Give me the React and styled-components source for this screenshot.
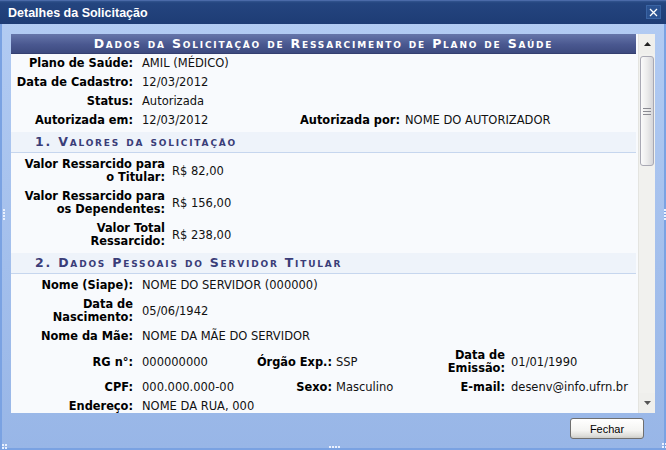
import React from "react";
import styled, { createGlobalStyle } from "styled-components";

const Global = createGlobalStyle`
  html, body { margin: 0; padding: 0; }
  body { width: 666px; height: 450px; overflow: hidden; background: #fff; }
  * { box-sizing: border-box; }
`;

const Window = styled.div`
  position: relative;
  width: 666px;
  height: 450px;
  display: flex;
  flex-direction: column;
  background: linear-gradient(#b3ccf3, #98b6e7);
  border: 2px solid #7aa2e2;
  border-top: none;
  font-family: "DejaVu Sans", Verdana, sans-serif;
`;

const TitleBar = styled.div`
  height: 24px;
  margin: 0 -2px;
  flex: none;
  display: flex;
  align-items: center;
  justify-content: space-between;
  padding: 0 5px 0 8px;
  background: linear-gradient(#33558f 0px, #24457f 2px, #1e3c75 100%);
  border-top: 1px solid #4a6aa8;
`;

const Title = styled.span`
  font-family: "Liberation Sans", Arial, sans-serif;
  font-weight: bold;
  font-size: 12.5px;
  color: #fff;
`;

const CloseBox = styled.div`
  width: 15px;
  height: 14px;
  display: flex;
  align-items: center;
  justify-content: center;
  background: #2b5291;
  border: 1px solid #3a64a4;
  margin-top: -1px;
`;

const Body = styled.div`
  flex: 1;
  display: flex;
  flex-direction: column;
  padding: 10px 9px 0 9px;
`;

const Frame = styled.div`
  height: 379px;
  flex: none;
  display: flex;
  background: #f8fafd;
`;

const Scroller = styled.div`
  flex: 1;
  overflow: hidden;
  padding-right: 2px;
`;

const Caption = styled.div`
  height: 20px;
  line-height: 20px;
  text-align: center;
  color: #fff;
  font-weight: bold;
  font-size: 12.5px;
  font-variant: small-caps;
  letter-spacing: 1.8px;
  white-space: nowrap;
  background: linear-gradient(#6676aa, #4a5890 55%, #3d4a7f);
  border-bottom: 1px solid #343f70;
`;

const Section = styled.div`
  margin-top: 2px;
  height: 21px;
  line-height: 20px;
  padding-left: 24px;
  color: #3a3d78;
  font-weight: bold;
  font-size: 12.5px;
  font-variant: small-caps;
  letter-spacing: 1.8px;
  white-space: nowrap;
  background: #eef3fa;
  border-bottom: 1px solid #c6d6ee;
`;

const Grid = styled.div`
  display: grid;
  grid-template-columns: ${(p) => p.$cols};
  margin-top: ${(p) => p.$top || 0}px;
  align-items: center;
`;

const Label = styled.div`
  text-align: right;
  font-weight: bold;
  font-size: 11.4px;
  line-height: 13px;
  padding: 3px 0;
  color: #000;
  white-space: nowrap;
`;

const Value = styled.div`
  grid-column: span ${(p) => p.$span || 1};
  font-size: 11.5px;
  line-height: 13px;
  padding: 3px 0 3px ${(p) => p.$pad || 0}px;
  color: #111;
  white-space: nowrap;
`;

const ScrollBar = styled.div`
  width: 17px;
  flex: none;
  display: flex;
  flex-direction: column;
  background: #f1f1ee;
  border-left: 1px solid #e4e4e0;
`;

const ArrowBtn = styled.div`
  height: 20px;
  flex: none;
  display: flex;
  align-items: center;
  justify-content: center;
  background: #efefec;
`;

const Track = styled.div`
  flex: 1;
  padding: 2px 1px 0 1px;
`;

const Thumb = styled.div`
  height: 110px;
  border: 1px solid #a9a9b4;
  border-radius: 3px;
  background: linear-gradient(90deg, #fbfbfb, #ececec 50%, #d6d6d9);
  display: flex;
  align-items: center;
  justify-content: center;
`;

const Footer = styled.div`
  flex: 1;
  display: flex;
  justify-content: flex-end;
  align-items: flex-start;
  padding: 5px 11px 0 0;
`;

const Button = styled.button`
  width: 74px;
  height: 21px;
  padding: 0;
  font-family: "Liberation Sans", Arial, sans-serif;
  font-size: 11px;
  color: #000;
  border: 1px solid #6f6f6f;
  border-radius: 3px;
  background: linear-gradient(#ffffff, #f4f4f2 60%, #dcdcd8 90%, #c8c8c4);
  box-shadow: inset 0 -1px 0 #d0d0cc;
`;

const Grip = styled.div`
  position: absolute;
  width: ${(p) => p.$w}px;
  height: ${(p) => p.$h}px;
  left: ${(p) => p.$x}px;
  top: ${(p) => p.$y}px;
  background-image: radial-gradient(circle at 1px 1px, #eef4ff 0.9px, transparent 1px);
  background-size: 3px 3px;
  opacity: 0.95;
`;

const Up = () => (
  <svg width="7" height="4" viewBox="0 0 7 4"><path d="M3.5 0 L7 4 L0 4 Z" fill="#222" /></svg>
);
const Down = () => (
  <svg width="7" height="4" viewBox="0 0 7 4"><path d="M0 0 L7 0 L3.5 4 Z" fill="#555" /></svg>
);

export default function App() {
  return (
    <>
      <Global />
      <Window>
        <TitleBar>
          <Title>Detalhes da Solicitação</Title>
          <CloseBox>
            <svg width="9" height="9" viewBox="0 0 9 9">
              <path d="M1 1 L8 8 M8 1 L1 8" stroke="#fff" strokeWidth="1.3" />
            </svg>
          </CloseBox>
        </TitleBar>
        <Body>
          <Frame>
            <Scroller>
              <Caption>Dados da Solicitação de Ressarcimento de Plano de Saúde</Caption>
              <Grid $cols="122px 147px 120px 1fr">
                <Label>Plano de Saúde:</Label>
                <Value $span={3} $pad={9}>AMIL (MÉDICO)</Value>
                <Label>Data de Cadastro:</Label>
                <Value $span={3} $pad={9}>12/03/2012</Value>
                <Label>Status:</Label>
                <Value $span={3} $pad={9}>Autorizada</Value>
                <Label>Autorizada em:</Label>
                <Value $pad={9}>12/03/2012</Value>
                <Label>Autorizada por:</Label>
                <Value $pad={5}>NOME DO AUTORIZADOR</Value>
              </Grid>
              <Section>1. Valores da solicitação</Section>
              <Grid $cols="154px 1fr" $top={2}>
                <Label>Valor Ressarcido para<br />o Titular:</Label>
                <Value $pad={7}>R$ 82,00</Value>
                <Label>Valor Ressarcido para<br />os Dependentes:</Label>
                <Value $pad={7}>R$ 156,00</Value>
                <Label>Valor Total<br />Ressarcido:</Label>
                <Value $pad={7}>R$ 238,00</Value>
              </Grid>
              <Section>2. Dados Pessoais do Servidor Titular</Section>
              <Grid $cols="122px 117px 82px 88px 85px 1fr" $top={2}>
                <Label>Nome (Siape):</Label>
                <Value $span={5} $pad={9}>NOME DO SERVIDOR (000000)</Value>
                <Label>Data de<br />Nascimento:</Label>
                <Value $span={5} $pad={9}>05/06/1942</Value>
                <Label>Nome da Mãe:</Label>
                <Value $span={5} $pad={9}>NOME DA MÃE DO SERVIDOR</Value>
                <Label>RG n°:</Label>
                <Value $pad={9}>000000000</Value>
                <Label>Órgão Exp.:</Label>
                <Value $pad={4}>SSP</Value>
                <Label>Data de<br />Emissão:</Label>
                <Value $pad={6}>01/01/1990</Value>
                <Label>CPF:</Label>
                <Value $pad={9}>000.000.000-00</Value>
                <Label>Sexo:</Label>
                <Value $pad={4}>Masculino</Value>
                <Label>E-mail:</Label>
                <Value $pad={6}>desenv@info.ufrn.br</Value>
                <Label>Endereço:</Label>
                <Value $span={5} $pad={9}>NOME DA RUA, 000</Value>
              </Grid>
            </Scroller>
            <ScrollBar>
              <ArrowBtn><Up /></ArrowBtn>
              <Track>
                <Thumb>
                  <svg width="8" height="7" viewBox="0 0 8 7">
                    <path d="M0 0.5 H8 M0 3.5 H8 M0 6.5 H8" stroke="#8a8a92" strokeWidth="1" />
                  </svg>
                </Thumb>
              </Track>
              <ArrowBtn><Down /></ArrowBtn>
            </ScrollBar>
          </Frame>
          <Footer>
            <Button>Fechar</Button>
          </Footer>
        </Body>
        <Grip $x={1} $y={209} $w={3} $h={12} />
        <Grip $x={662} $y={209} $w={3} $h={12} />
        <Grip $x={327} $y={446} $w={12} $h={3} />
        <Grip $x={0} $y={444} $w={5} $h={5} />
        <Grip $x={660} $y={443} $w={6} $h={6} />
      </Window>
    </>
  );
}
